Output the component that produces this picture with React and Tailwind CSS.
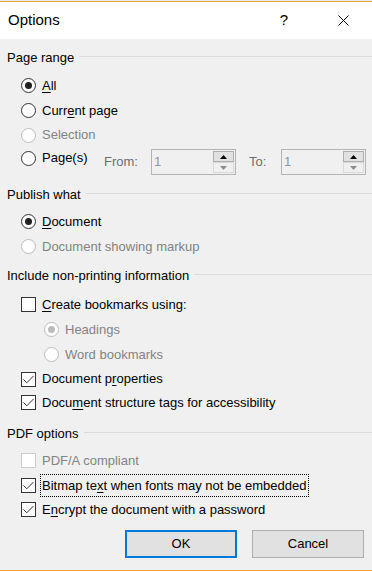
import React from 'react';

const FONT = { fontFamily: '"Liberation Sans", Arial, sans-serif' };

// group heading with the etched rule running to the right edge
const GroupHeading = ({ children, className = '' }) => (
  <div className={`flex items-center h-[20px] pl-[7px] ${className}`}>
    <span className="text-black whitespace-nowrap">{children}</span>
    <div className="flex-1 h-px bg-[#dcdcdc] ml-[5px] -mt-[4px]" />
  </div>
);

const Radio = ({ checked, disabled }) => (
  <span
    className={`w-[15px] h-[15px] rounded-full border bg-white flex items-center justify-center shrink-0 ${
      disabled ? 'border-[#bcbcbc]' : 'border-[#333333]'
    }`}
  >
    {checked && (
      <span className={`w-[7px] h-[7px] rounded-full ${disabled ? 'bg-[#bcbcbc]' : 'bg-[#222222]'}`} />
    )}
  </span>
);

const Checkbox = ({ checked, disabled }) => (
  <span
    className={`w-[15px] h-[15px] border bg-white flex items-center justify-center shrink-0 ${
      disabled ? 'border-[#cccccc]' : 'border-[#333333]'
    }`}
  >
    {checked && (
      <svg width="13" height="13" viewBox="0 0 13 13" fill="none">
        <path d="M1.5 6.5 L4.8 9.8 L11.5 3" stroke="#333333" strokeWidth="1" />
      </svg>
    )}
  </span>
);

const Row = ({ control, children, disabled, indent = false, h = 'h-[25px]', focus = false }) => (
  <div className={`flex items-center ${h} ${indent ? 'pl-[44px]' : 'pl-[21px]'}`}>
    {control}
    <span
      className={`ml-[6px] whitespace-nowrap ${disabled ? 'text-[#838383]' : 'text-black'} ${
        focus ? 'outline outline-1 outline-dotted outline-black outline-offset-[1px]' : ''
      }`}
    >
      {children}
    </span>
  </div>
);

const SpinBox = () => (
  <div className="w-[85px] h-[26px] border border-[#b4b4b4] bg-[#f0f0f0] flex items-center shrink-0">
    <span className="pl-[2px] text-[#8a98ad]">1</span>
    <div className="ml-auto mr-[1px] flex flex-col">
      <div className="w-[21px] h-[11px] border border-[#adadad] bg-[#e1e1e1] flex items-center justify-center">
        <svg width="7" height="4" viewBox="0 0 7 4">
          <path d="M0 4 L3.5 0 L7 4 Z" fill="#000" />
        </svg>
      </div>
      <div className="w-[21px] h-[11px] border border-[#d9d9d9] bg-[#f0f0f0] flex items-center justify-center">
        <svg width="7" height="4" viewBox="0 0 7 4">
          <path d="M0 0 L7 0 L3.5 4 Z" fill="#8c8c8c" />
        </svg>
      </div>
    </div>
  </div>
);

const App = () => {
  return (
    <div className="w-[372px] h-[571px] flex flex-col bg-[#f0f0f0] text-[13px] overflow-hidden" style={FONT}>
      {/* window frame edge */}
      <div className="h-px bg-[#ececec]" />
      <div className="h-px bg-[#e8a33c]" />

      {/* title bar */}
      <div className="h-[37px] bg-white flex items-center">
        <span className="pl-[8px] text-[15px] text-black">Options</span>
        <span className="ml-auto text-[15px] text-black w-[12px] text-center mr-[48px]">?</span>
        <svg className="mr-[23px]" width="11" height="11" viewBox="0 0 11 11">
          <path d="M0.5 0.5 L10.5 10.5 M10.5 0.5 L0.5 10.5" stroke="#000" strokeWidth="1" />
        </svg>
      </div>

      <div className="flex-1 flex flex-col">
        <GroupHeading className="mt-[9px]">Page range</GroupHeading>
        <div className="mt-[5px]">
          <Row control={<Radio checked />}>
            <u className="underline-offset-2">A</u>ll
          </Row>
          <Row control={<Radio />}>
            Curr<u className="underline-offset-2">e</u>nt page
          </Row>
          <Row control={<Radio disabled />} disabled h="h-[24px]">
            Selection
          </Row>
          <div className="flex items-start mt-[2px] pl-[21px] h-[26px]">
            <div className="flex items-center h-[18px] w-[83px]">
              <Radio />
              <span className="ml-[6px]">Page(s)</span>
            </div>
            <div className="flex items-center h-[26px]">
              <span className="w-[47px] text-[#6d6d6d]">From:</span>
              <SpinBox />
              <span className="ml-[13px] w-[32px] text-[#6d6d6d]">To:</span>
              <SpinBox />
            </div>
          </div>
        </div>

        <GroupHeading className="mt-[10px]">Publish what</GroupHeading>
        <div className="mt-[4px]">
          <Row control={<Radio checked />}>
            <u className="underline-offset-2">D</u>ocument
          </Row>
          <Row control={<Radio disabled />} disabled>
            Document showing markup
          </Row>
        </div>

        <GroupHeading className="mt-[7px]">Include non-printing information</GroupHeading>
        <div className="mt-[6px]">
          <Row control={<Checkbox />}>
            <u className="underline-offset-2">C</u>reate bookmarks using:
          </Row>
          <Row control={<Radio checked disabled />} disabled indent>
            Headings
          </Row>
          <Row control={<Radio disabled />} disabled indent>
            Word bookmarks
          </Row>
          <Row control={<Checkbox checked />} h="h-[24px]">
            Document p<u className="underline-offset-2">r</u>operties
          </Row>
          <Row control={<Checkbox checked />} h="h-[23px]">
            Docu<u className="underline-offset-2">m</u>ent structure tags for accessibility
          </Row>
        </div>

        <GroupHeading className="mt-[10px]">PDF options</GroupHeading>
        <div className="mt-[4px]">
          <Row control={<Checkbox disabled />} disabled>
            PDF/A compliant
          </Row>
          <Row control={<Checkbox checked />} focus>
            Bitmap te<u className="underline-offset-2">x</u>t when fonts may not be embedded
          </Row>
          <Row control={<Checkbox checked />} h="h-[23px]">
            E<u className="underline-offset-2">n</u>crypt the document with a password
          </Row>
        </div>

        <div className="flex justify-end gap-[15px] pr-[8px] mt-[9px]">
          <button className="w-[112px] h-[28px] border-2 border-[#0078d7] bg-[#e1e1e1] text-black">OK</button>
          <button className="w-[112px] h-[28px] border border-[#adadad] bg-[#e1e1e1] text-black">Cancel</button>
        </div>
      </div>

      <div className="h-px bg-[#e8a33c]" />
    </div>
  );
};

export default App;
